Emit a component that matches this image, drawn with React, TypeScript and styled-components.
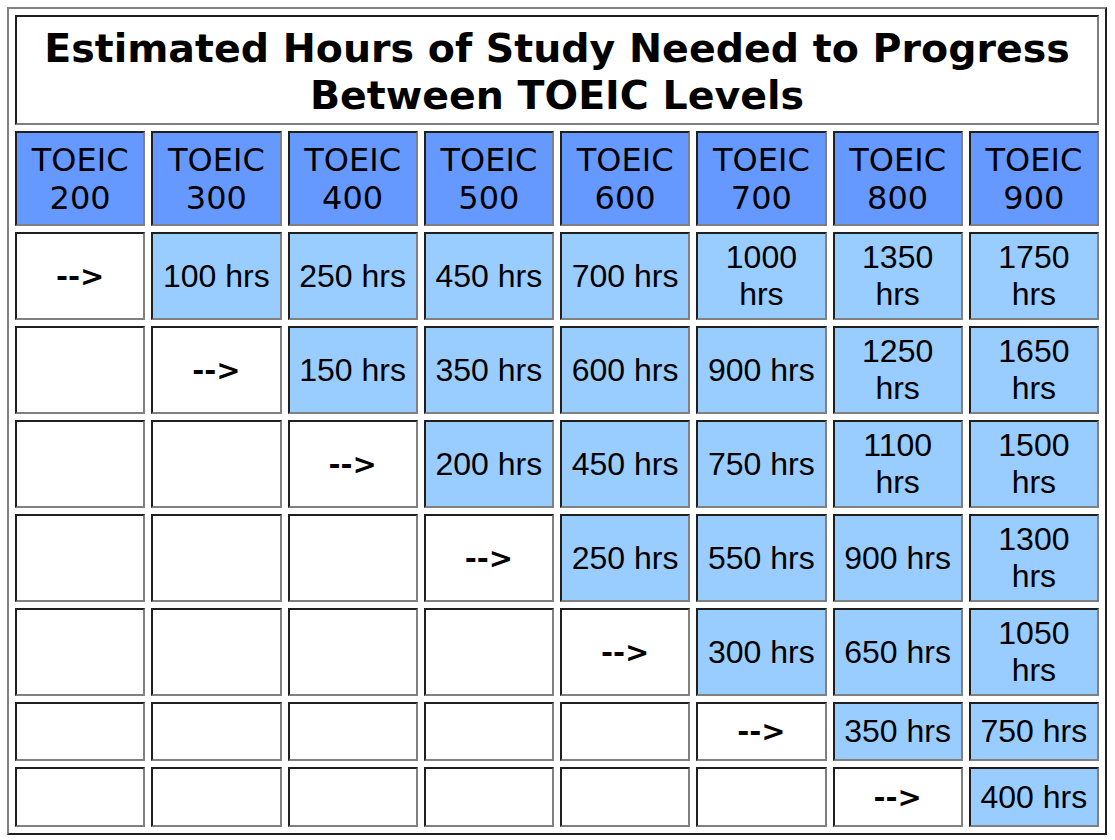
import React from "react";
import styled, { createGlobalStyle } from "styled-components";

const GlobalStyle = createGlobalStyle`
  html, body {
    margin: 0;
    padding: 0;
    background: #ffffff;
  }
  body {
    padding: 7px;
  }
`;

const DARK = "#1f1f1f";
const GRAY = "#808080";

const Table = styled.table`
  width: 1100px;
  table-layout: fixed;
  border-collapse: separate;
  border-spacing: 6px;
  border-style: solid;
  border-width: 2px;
  border-color: ${GRAY} ${DARK} ${DARK} ${GRAY};
  box-sizing: border-box;
`;

const Cell = styled.td`
  box-sizing: border-box;
  border-style: solid;
  border-width: 2px;
  border-color: ${DARK} ${GRAY} ${GRAY} ${DARK};
  text-align: center;
  vertical-align: middle;
  color: #000;
  padding: 0 4px;
`;

const TitleCell = styled(Cell).attrs({ as: "th" })`
  height: 110px;
  background: #ffffff;
  font-family: "DejaVu Sans", Verdana, sans-serif;
  font-weight: bold;
  font-size: 39.5px;
  line-height: 47px;
  padding: 4px 2px 0;
`;

const HeadCell = styled(Cell).attrs({ as: "th" })`
  height: 95px;
  background: #6699ff;
  font-family: "DejaVu Sans", Verdana, sans-serif;
  font-weight: normal;
  font-size: 32px;
  line-height: 38px;
  padding: 0 2px;
`;

type Kind = "hours" | "arrow" | "empty";

const DataCell = styled(Cell)<{ $kind: Kind; $h: number }>`
  height: ${(p) => p.$h}px;
  background: ${(p) => (p.$kind === "hours" ? "#99ccff" : "#ffffff")};
  font-family: ${(p) =>
    p.$kind === "arrow"
      ? `"DejaVu Sans", Verdana, sans-serif`
      : `"Liberation Sans", Arial, sans-serif`};
  font-weight: ${(p) => (p.$kind === "arrow" ? "bold" : "normal")};
  font-size: ${(p) => (p.$kind === "arrow" ? "29px" : "32px")};
  line-height: 37px;
`;

const levels = [200, 300, 400, 500, 600, 700, 800, 900];

const rows: (number | "arrow" | null)[][] = [
  ["arrow", 100, 250, 450, 700, 1000, 1350, 1750],
  [null, "arrow", 150, 350, 600, 900, 1250, 1650],
  [null, null, "arrow", 200, 450, 750, 1100, 1500],
  [null, null, null, "arrow", 250, 550, 900, 1300],
  [null, null, null, null, "arrow", 300, 650, 1050],
  [null, null, null, null, null, "arrow", 350, 750],
  [null, null, null, null, null, null, "arrow", 400],
];

const rowHeights = [88, 88, 88, 88, 88, 59, 60];

export default function App() {
  return (
    <>
      <GlobalStyle />
      <Table>
        <tbody>
          <tr>
            <TitleCell colSpan={8}>
              Estimated Hours of Study Needed to Progress
              <br />
              Between TOEIC Levels
            </TitleCell>
          </tr>
          <tr>
            {levels.map((l) => (
              <HeadCell key={l}>TOEIC {l}</HeadCell>
            ))}
          </tr>
          {rows.map((row, ri) => (
            <tr key={ri}>
              {row.map((v, ci) => {
                const kind: Kind =
                  v === "arrow" ? "arrow" : v === null ? "empty" : "hours";
                return (
                  <DataCell key={ci} $kind={kind} $h={rowHeights[ri]}>
                    {kind === "arrow" ? "-->" : kind === "hours" ? `${v} hrs` : ""}
                  </DataCell>
                );
              })}
            </tr>
          ))}
        </tbody>
      </Table>
    </>
  );
}
